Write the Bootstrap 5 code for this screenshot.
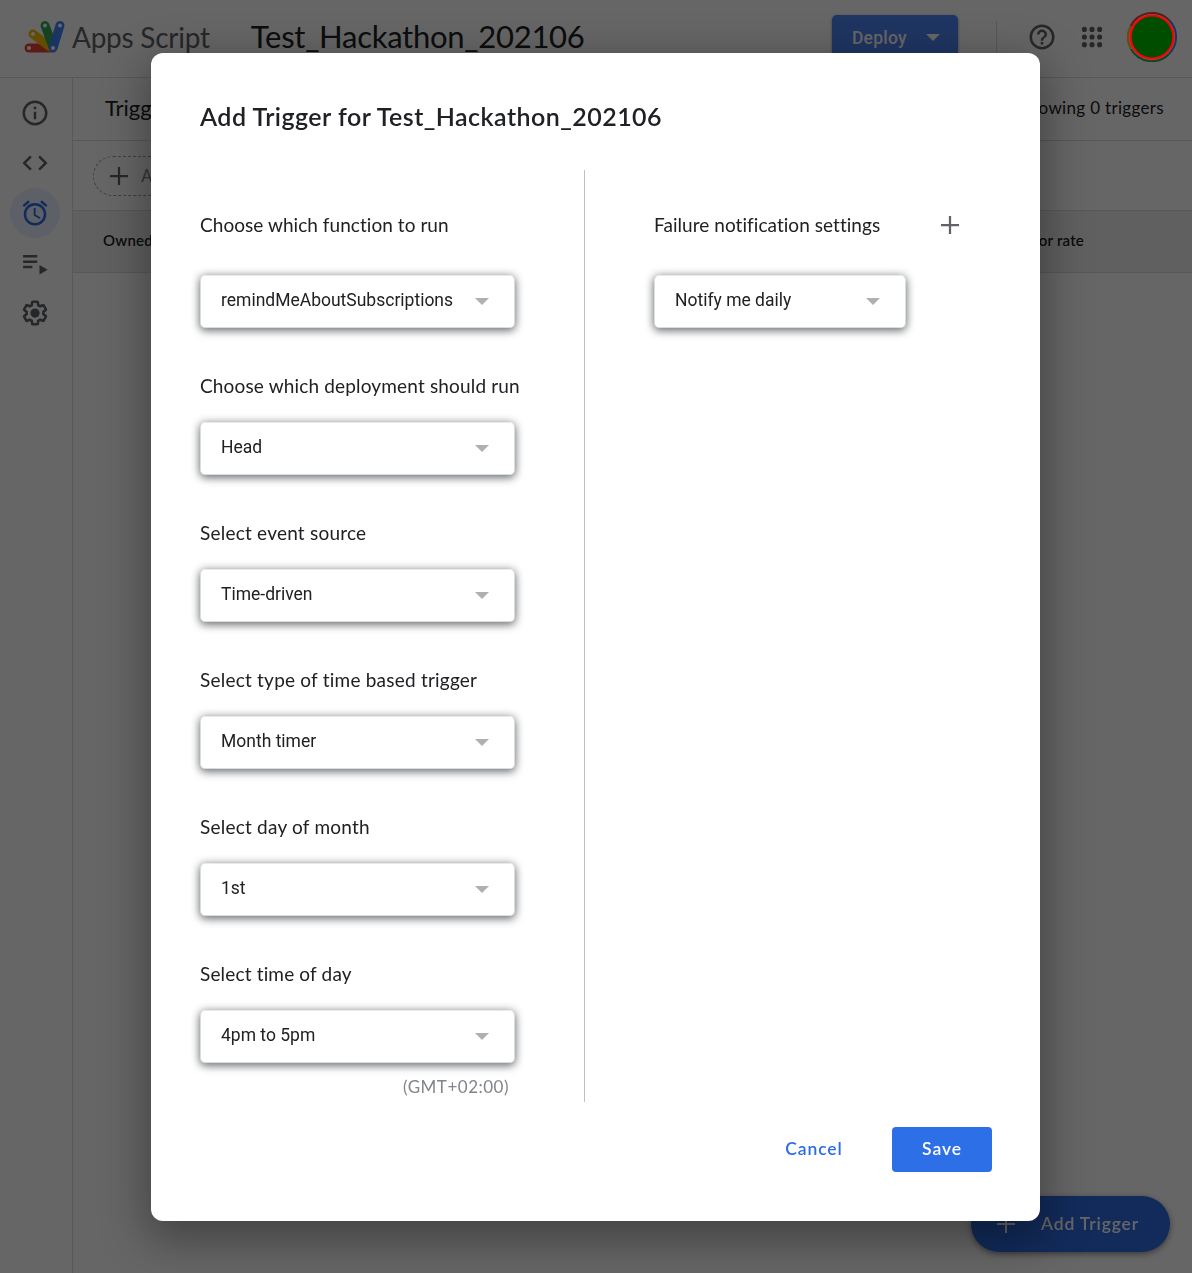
<!DOCTYPE html>
<html lang="en">
<head>
<meta charset="utf-8">
<meta name="viewport" content="width=device-width, initial-scale=1">
<title>Apps Script</title>
<link href="https://cdn.jsdelivr.net/npm/bootstrap@5.3.0/dist/css/bootstrap.min.css" rel="stylesheet">
<style>
body{font-family:Lato,"Open Sans",sans-serif;color:#202124;background:#fff;overflow:hidden}
svg{display:block;flex:none}
.ico{width:30px;height:30px;fill:#5f6368}
.screen{height:1273px}
.topbar{height:78px;border-bottom:1px solid #dadce0;padding:0 15px 4px 20px}
.brand{font-size:28px;color:#5f6368;letter-spacing:-.25px;margin-left:4px}
.project{font-size:31px;letter-spacing:-.27px;margin-left:41px;line-height:44px;margin-top:-2px}
.deploy{width:126px;height:45px;background:#4f86f5;color:#fff;border-radius:5px;font:500 17.5px Roboto,sans-serif;letter-spacing:.2px;padding:0 18px 0 20px;margin-top:2px;box-shadow:0 1px 3px rgba(0,0,0,.4)}
.caret-tri{width:0;height:0;border:7px solid transparent;border-top-color:currentColor;border-bottom-width:0}
.split{width:1px;height:36px;background:#dadce0;margin:4px 30px 0 38px}
.after-help{margin-left:20px}
.avatar{z-index:1052;margin-left:20px}
.rail{width:73px;border-right:1px solid #dadce0;padding:10px 12px 0 10px}
.rail-item{width:50px;height:50px;border-radius:50%;padding-right:1px}
.rail-item.active{background:#e8f0fe}
.rail-item.active .ico{fill:#2d6ce4}
.titlebar{height:63px;border-bottom:1px solid #dadce0;padding:0 28px 3px 32px}
.page-name{font-size:22px}
.count{font-size:17px;letter-spacing:.33px}
.filterbar{height:70px;border-bottom:1px solid #dadce0;padding:0 20px}
.chip{height:40px;width:170px;border:1px dashed #9aa0a6;border-radius:20px;padding-left:10px;color:#80868b;font:17.5px Roboto,sans-serif;gap:7px}
.thead-row{height:62px;background:#f1f1f1;border-bottom:1px solid #dadce0;padding:0 108px 2px 30px;font-size:15px;font-weight:600;letter-spacing:.2px}
.fab{right:22px;bottom:21px;width:199px;height:56px;border-radius:28px;background:#2d6ce4;color:#fff;padding-left:20px;font-size:17.5px;font-weight:600;letter-spacing:.85px;box-shadow:0 2px 6px rgba(0,0,0,.45)}
.fab .ico{fill:#fff}
.modal-backdrop{--bs-backdrop-opacity:.6}
.trigger-dialog{max-width:none;margin:53px 152px 0 151px}
.trigger-dialog .modal-content{height:1168px;border:0;border-radius:12px;box-shadow:0 14px 45px 5px rgba(0,0,0,.35);color:#202124}
.dialog-title{font-size:25px;font-weight:600;letter-spacing:.46px;line-height:32px;padding:47px 49px 0;margin-bottom:38px}
.pane-row{height:932px}
.pane-left{width:434px;border-right:1px solid #bdc1c6;padding:43px 0 0 49px}
.pane-right{padding:43px 0 0 69px}
.lbl{font-size:19px;line-height:24px;height:24px;margin-bottom:24px;white-space:nowrap;letter-spacing:.16px}
.lbl-first{margin-bottom:38px;letter-spacing:.05px}
.lbl-wide{letter-spacing:.22px}
.alert-head{width:311px}
.field{margin-bottom:46px}
.picker{width:315px;height:53px;border-radius:5px;background:#fff;border:1px solid #dadce0;border-top-color:#e8eaed;padding:0 25px 3px 20px;font:17.5px Roboto,sans-serif;color:#202124;box-shadow:0 3px 9px rgba(60,64,67,.62),0 0 9px rgba(60,64,67,.32)}
.picker .caret-tri{color:#b0b0b0;border-width:7px 7.5px 0;margin-top:3px}
.picker-sm{width:252px}
.tz{width:309px;font-size:17px;letter-spacing:.5px;color:#80868b;line-height:24px;margin-top:-34px}
.dialog-actions{padding:25px 48px 0}
.act{height:45px;border-radius:4px;font-size:17.5px;font-weight:600;letter-spacing:.9px;padding:0}
.act-cancel{color:#2d6ce4;width:60px;margin-right:48px}
.act-save{width:100px;background:#2d6fe6;color:#fff}
</style>
<script src="https://cdn.jsdelivr.net/npm/bootstrap@5.3.0/dist/js/bootstrap.bundle.min.js"></script>
</head>
<body>
<div class="screen d-flex flex-column">
  <header class="topbar d-flex align-items-center">
    <svg width="48" height="40" viewBox="20 16 48 40" fill="none" stroke-width="9" stroke-linecap="round">
      <path d="M29 47H50" stroke="#ea4335"/><path d="M33 33L50 46" stroke="#fbbc04"/><path d="M45 24.500L53 46" stroke="#34a853"/><path d="M60 24.500L53 47" stroke="#4285f4"/>
      <g fill="#fff"><circle cx="29" cy="47" r="2"/><circle cx="33" cy="33" r="2"/><circle cx="45" cy="24.500" r="2"/><circle cx="60" cy="24.500" r="2"/><circle cx="53" cy="47" r="2"/></g>
    </svg>
    <div class="brand">Apps Script</div>
    <div class="project flex-grow-1">Test_Hackathon_202106</div>
    <div class="deploy d-flex align-items-center justify-content-between">Deploy<span class="caret-tri"></span></div>
    <div class="split"></div>
    <svg class="ico" viewBox="0 0 24 24"><path d="M11 18h2v-2h-2zm1-16a10 10 0 1 0 0 20 10 10 0 0 0 0-20m0 18a8 8 0 1 1 0-16 8 8 0 0 1 0 16m0-14a4 4 0 0 0-4 4h2a2 2 0 1 1 4 0c0 2-3 1.750-3 5h2c0-2.250 3-2.500 3-5a4 4 0 0 0-4-4"/></svg>
    <svg class="ico after-help" viewBox="0 0 24 24"><circle cx="5.900" cy="5.900" r="2.050"/><circle cx="12" cy="5.900" r="2.050"/><circle cx="18.100" cy="5.900" r="2.050"/><circle cx="5.900" cy="12" r="2.050"/><circle cx="12" cy="12" r="2.050"/><circle cx="18.100" cy="12" r="2.050"/><circle cx="5.900" cy="18.100" r="2.050"/><circle cx="12" cy="18.100" r="2.050"/><circle cx="18.100" cy="18.100" r="2.050"/></svg>
    <svg class="avatar position-relative" width="50" height="50" viewBox="-25 -25 50 50" fill="none" stroke-width="2">
      <path d="M-21.500-10.500A24 24 0 0 1 17-17" stroke="#5e1b17"/><path d="M17-17A24 24 0 0 1 17 17" stroke="#1b3563"/><path d="M17 17A24 24 0 0 1-21 12" stroke="#154322"/><path d="M-21 12A24 24 0 0 1-21.500-10.500" stroke="#644b10"/>
      <circle r="21.500" fill="#004d00" stroke="#f00" stroke-width="2.200"/>
    </svg>
  </header>
  <div class="d-flex flex-grow-1">
    <nav class="rail">
      <div class="rail-item d-flex align-items-center justify-content-center"><svg class="ico" viewBox="0 0 24 24"><path d="M11 7h2v2h-2zm0 4h2v6h-2zm1-9a10 10 0 1 0 0 20 10 10 0 0 0 0-20m0 18a8 8 0 1 1 0-16 8 8 0 0 1 0 16"/></svg></div>
      <div class="rail-item d-flex align-items-center justify-content-center"><svg class="ico" viewBox="0 0 24 24"><path d="M9.400 16.600 4.800 12l4.600-4.600L8 6l-6 6 6 6zm5.200 0 4.600-4.600-4.600-4.600L16 6l6 6-6 6z"/></svg></div>
      <div class="rail-item active d-flex align-items-center justify-content-center"><svg class="ico" viewBox="0 0 24 24"><path d="M22 5.720l-4.600-3.860-1.290 1.530 4.600 3.860zM7.880 3.390L6.600 1.860 2 5.710l1.290 1.530zM12.500 8H11v6l4.750 2.850.75-1.230-4-2.370zM12 4a9 9 0 1 0 0 18 9 9 0 0 0 0-18m0 16a7 7 0 1 1 0-14 7 7 0 0 1 0 14"/></svg></div>
      <div class="rail-item d-flex align-items-center justify-content-center"><svg class="ico" viewBox="0 0 24 24"><path d="M2.500 5.600h11.300v2H2.500zM2.500 9.900h11.300v2H2.500zM2.500 14.200h7.400v2H2.500zM15.600 13.600v7.600l6.500-3.800z"/></svg></div>
      <div class="rail-item d-flex align-items-center justify-content-center"><svg class="ico" viewBox="0 0 24 24"><path transform="translate(1.200 1.200) scale(.9)" fill="none" stroke="#5f6368" stroke-width="2.300" d="M19.430 12.980c.04-.32.07-.64.07-.98 0-.34-.03-.66-.07-.98l2.110-1.650c.19-.15.24-.42.12-.64l-2-3.460c-.09-.16-.26-.25-.44-.25-.06 0-.12.010-.17.030l-2.490 1c-.52-.4-1.080-.73-1.690-.98l-.38-2.650C14.460 2.180 14.250 2 14 2h-4c-.25 0-.46.18-.49.42l-.38 2.650c-.61.25-1.170.59-1.690.98l-2.490-1c-.06-.02-.12-.03-.18-.03-.17 0-.34.09-.43.25l-2 3.460c-.13.22-.07.49.12.64l2.110 1.650c-.04.32-.07.65-.07.98 0 .33.03.66.07.98l-2.110 1.650c-.19.15-.24.42-.12.64l2 3.460c.09.16.26.25.44.25.06 0 .12-.01.17-.03l2.490-1c.52.4 1.080.73 1.690.98l.38 2.650c.03.24.24.42.49.42h4c.25 0 .46-.18.49-.42l.38-2.650c.61-.25 1.170-.59 1.690-.98l2.490 1c.06.02.12.03.18.03.17 0 .34-.09.43-.25l2-3.460c.12-.22.07-.49-.12-.64z"/><circle cx="12" cy="12" r="3.700"/></svg></div>
    </nav>
    <main class="flex-grow-1">
      <div class="titlebar d-flex align-items-center justify-content-between"><div class="page-name">Triggers</div><div class="count">Showing 0 triggers</div></div>
      <div class="filterbar d-flex align-items-center"><div class="chip d-flex align-items-center"><svg class="ico" viewBox="0 0 24 24"><path d="M19.200 12.900h-6.300v6.300h-1.800v-6.300H4.800v-1.800h6.300V4.800h1.800v6.300h6.300z"/></svg>Add a filter</div></div>
      <div class="thead-row d-flex align-items-center justify-content-between"><div>Owned by</div><div>Error rate</div></div>
    </main>
  </div>
  <div class="fab position-fixed d-flex align-items-center"><svg class="ico" viewBox="0 0 24 24"><path d="M19.200 12.800h-6.400v6.400h-1.600v-6.400H4.800v-1.600h6.400V4.800h1.600v6.400h6.400z"/></svg><span class="ms-3 ps-1">Add Trigger</span></div>
</div>
<div class="modal-backdrop show"></div>
<div class="modal d-block" tabindex="-1" role="dialog">
  <div class="modal-dialog trigger-dialog">
    <div class="modal-content">
      <div class="dialog-title">Add Trigger for Test_Hackathon_202106</div>
      <div class="pane-row d-flex">
        <div class="pane-left">
          <div class="field"><div class="lbl lbl-first">Choose which function to run</div><button class="picker d-flex align-items-center justify-content-between">remindMeAboutSubscriptions<span class="caret-tri"></span></button></div>
          <div class="field"><div class="lbl">Choose which deployment should run</div><button class="picker d-flex align-items-center justify-content-between">Head<span class="caret-tri"></span></button></div>
          <div class="field"><div class="lbl lbl-wide">Select event source</div><button class="picker d-flex align-items-center justify-content-between">Time-driven<span class="caret-tri"></span></button></div>
          <div class="field"><div class="lbl lbl-wide">Select type of time based trigger</div><button class="picker d-flex align-items-center justify-content-between">Month timer<span class="caret-tri"></span></button></div>
          <div class="field"><div class="lbl lbl-wide">Select day of month</div><button class="picker d-flex align-items-center justify-content-between">1st<span class="caret-tri"></span></button></div>
          <div class="field"><div class="lbl">Select time of day</div><button class="picker d-flex align-items-center justify-content-between">4pm to 5pm<span class="caret-tri"></span></button></div>
          <div class="tz text-end">(GMT+02:00)</div>
        </div>
        <div class="pane-right">
          <div class="lbl lbl-first alert-head d-flex align-items-center justify-content-between"><span>Failure notification settings</span><svg class="ico" viewBox="0 0 24 24"><path d="M19.200 12.900h-6.300v6.300h-1.800v-6.300H4.800v-1.800h6.300V4.800h1.800v6.300h6.300z"/></svg></div>
          <button class="picker picker-sm d-flex align-items-center justify-content-between">Notify me daily<span class="caret-tri"></span></button>
        </div>
      </div>
      <div class="dialog-actions d-flex justify-content-end"><button class="btn act act-cancel">Cancel</button><button class="btn act act-save">Save</button></div>
    </div>
  </div>
</div>
</body>
</html>
